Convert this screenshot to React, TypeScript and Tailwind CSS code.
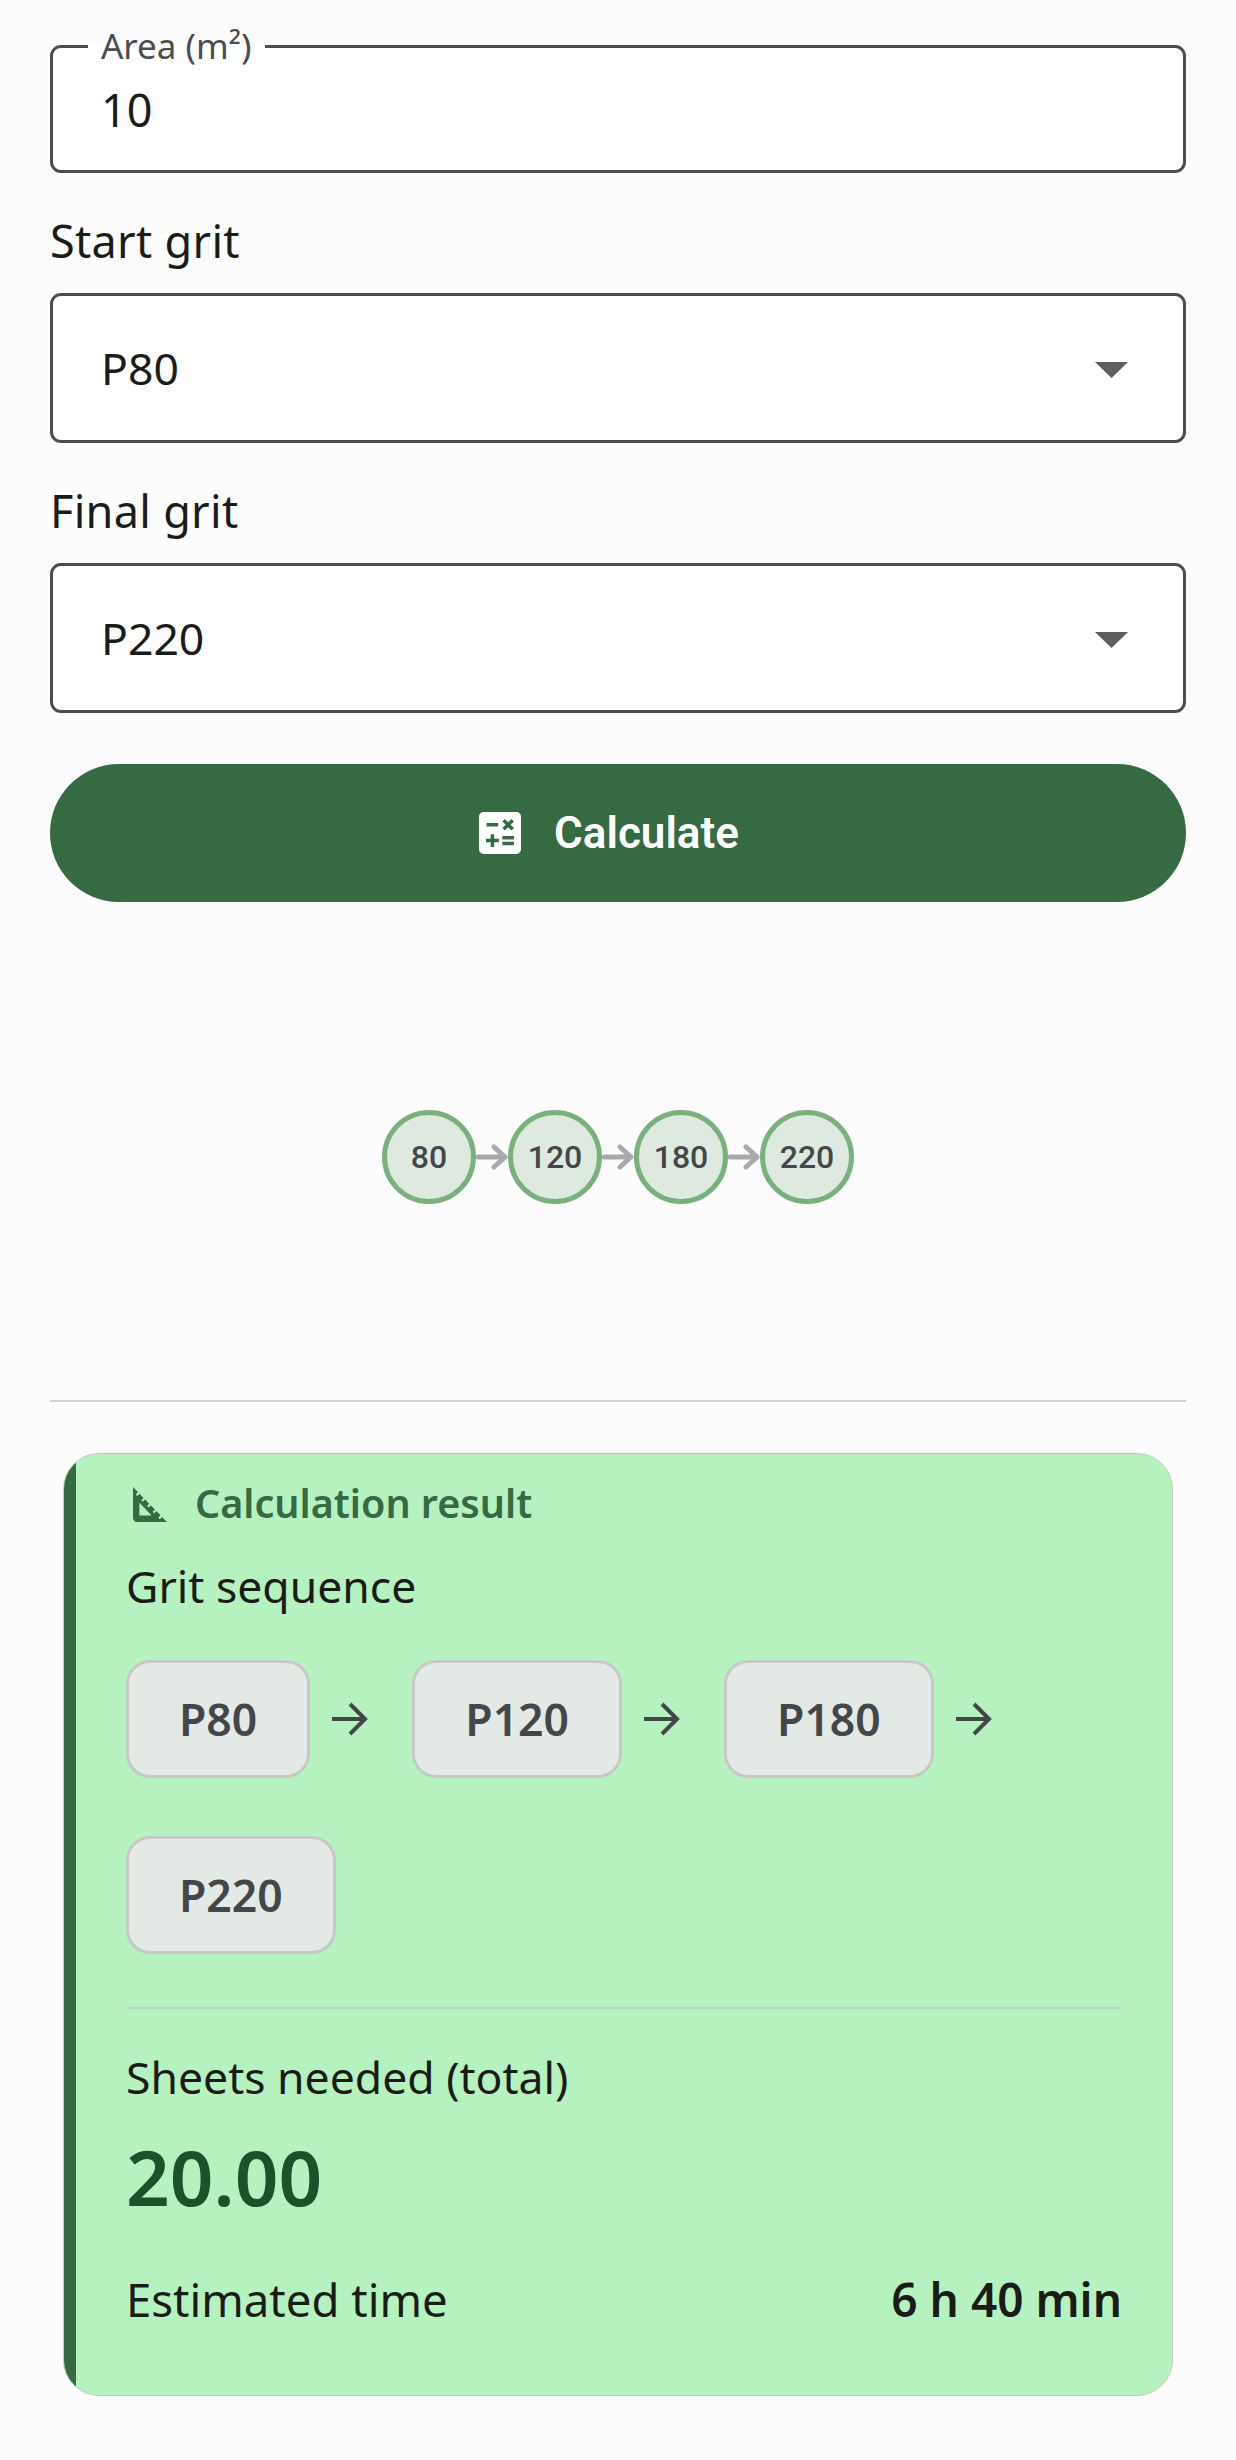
const noto = '[font-family:"Noto_Sans",sans-serif]'

function Caret() {
  return (
    <svg width="33" height="16" viewBox="0 0 33 16" className="mt-[3px] shrink-0">
      <path d="M0 0h33L16.500 16z" fill="#5f5f5f" />
    </svg>
  )
}

function SelectBox({ label, value }: { label: string; value: string }) {
  return (
    <div className="flex flex-col">
      <div className="h-[62px] text-[45px] leading-[62px] tracking-[0.3px] text-[#1a1c1a]">{label}</div>
      <div className="mt-[21px] flex h-[150px] items-center justify-between rounded-[11px] border-[3px] border-[#4a4c4f] bg-white pl-[48px] pr-[55px] text-[44.500px] text-[#1a1c1a]">
        <span>{value}</span>
        <Caret />
      </div>
    </div>
  )
}

function StepArrow() {
  return (
    <svg width="32" height="26" viewBox="0 0 32 26" className="shrink-0">
      <path d="M2 13h27M18 3l11 10-11 10" fill="none" stroke="#a7a9aa" strokeWidth="5" strokeLinecap="round" strokeLinejoin="round" />
    </svg>
  )
}

function Step({ grit }: { grit: string }) {
  return (
    <div className="flex h-[94px] w-[94px] items-center justify-center rounded-full border-[5px] border-[#7bb07e] bg-[#deeadf] font-['Roboto'] text-[32px] font-medium text-[#43474a]">
      {grit}
    </div>
  )
}

function Chip({ grit }: { grit: string }) {
  return (
    <div className="flex h-[118px] items-center rounded-[24px] border-[3px] border-[#c6c9c6] bg-[#e3e9e5] px-[50px] text-[44.500px] font-semibold text-[#43474a]">
      {grit}
    </div>
  )
}

function ChipArrow() {
  return (
    <svg width="102" height="40" viewBox="0 0 102 40" className="shrink-0">
      <path d="M22 20h33M40 5l15 15-15 15" fill="none" stroke="#43474a" strokeWidth="4" />
    </svg>
  )
}

export default function App() {
  return (
    <div className={`${noto} h-[2460px] bg-[#fcfcfc] px-[50px] pt-[24px]`}>
      <fieldset className="h-[149px] rounded-[11px] border-[3px] border-[#4a4c4f] bg-white pl-[35px] pr-[48px]">
        <legend className="h-[44px] px-[13px] text-[35px] leading-[44px] text-[#4a4c4f]">Area (m²)</legend>
        <div className="ml-[13px] mt-[11px] text-[45px] leading-[62px] text-[#1a1c1a]">10</div>
      </fieldset>

      <div className="mt-[37px] flex flex-col gap-[37px]">
        <SelectBox label="Start grit" value="P80" />
        <SelectBox label="Final grit" value="P220" />
      </div>

      <button className="mt-[51px] flex h-[138px] w-full items-center justify-center gap-[26px] rounded-full bg-[#356a43] pr-[25px] font-['Roboto'] text-[44px] font-semibold text-white">
        <svg width="56" height="56" viewBox="0 0 24 24" fill="#fff">
          <path d="M19 3H5c-1.100 0-2 .9-2 2v14c0 1.100.9 2 2 2h14c1.100 0 2-.9 2-2V5c0-1.100-.9-2-2-2zm-5.970 4.060L14.090 6l1.410 1.410L16.910 6l1.060 1.060-1.410 1.410 1.410 1.410-1.060 1.060-1.410-1.400-1.410 1.410-1.060-1.060 1.410-1.410-1.410-1.420zm-6.780.66h5v1.500h-5v-1.500zM11.500 16h-2v2H8v-2H6v-1.500h2v-2h1.500v2h2V16zm6.500 1.250h-5v-1.500h5v1.500zm0-2.500h-5v-1.500h5v1.500z" />
        </svg>
        Calculate
      </button>

      <div className="mt-[208px] flex items-center justify-center">
        <Step grit="80" />
        <StepArrow />
        <Step grit="120" />
        <StepArrow />
        <Step grit="180" />
        <StepArrow />
        <Step grit="220" />
      </div>

      <div className="mt-[196px] h-[2px] bg-[#d2d2d2]" />

      <div className="mx-[13px] mt-[51px] flex h-[943px] overflow-hidden rounded-[36px] border border-[#c3cbc3] bg-[#b5f2bf]">
        <div className="w-[12px] shrink-0 bg-[#356a43]" />
        <div className="min-w-0 flex-1 pl-[50px] pr-[50px]">
          <div className="mt-[26px] flex h-[48px] items-center gap-[28px]">
            <svg width="34" height="35" viewBox="4 4 16 16" preserveAspectRatio="none" fill="#356a43" className="ml-[7px] shrink-0">
              <path d="M17.660 17.660l-1.060 1.060-.71-.71 1.060-1.060-1.940-1.940-1.060 1.060-.71-.71 1.060-1.060-1.940-1.940-1.060 1.060-.71-.71 1.060-1.060L9.700 9.700l-1.060 1.060-.71-.71 1.060-1.060-1.940-1.940-1.060 1.060-.71-.71 1.060-1.060L4 4v14c0 1.100.9 2 2 2h14l-2.340-2.340zM7 17v-5.760L12.760 17H7z" />
            </svg>
            <span className="text-[39.500px] font-semibold text-[#356a43]">Calculation result</span>
          </div>

          <div className="mt-[28px] text-[44.500px] leading-[60px] text-[#1a1c1a]">Grit sequence</div>

          <div className="mt-[44px] flex flex-wrap items-center gap-y-[58px]">
            <Chip grit="P80" />
            <ChipArrow />
            <Chip grit="P120" />
            <ChipArrow />
            <Chip grit="P180" />
            <ChipArrow />
            <Chip grit="P220" />
          </div>

          <div className="mt-[53px] h-[2px] bg-[#c6d0c4]" />

          <div className="mt-[38px] text-[44.500px] leading-[60px] text-[#1a1c1a]">Sheets needed (total)</div>
          <div className="mt-[17px] text-[76.500px] font-semibold leading-[104px] text-[#1a5229]">20.00</div>

          <div className="mt-[41px] flex items-center justify-between">
            <span className="text-[45.500px] leading-[60px] text-[#1a1c1a]">Estimated time</span>
            <span className="text-[46px] font-semibold leading-[60px] text-[#1a1c1a]">6 h 40 min</span>
          </div>
        </div>
      </div>
    </div>
  )
}
